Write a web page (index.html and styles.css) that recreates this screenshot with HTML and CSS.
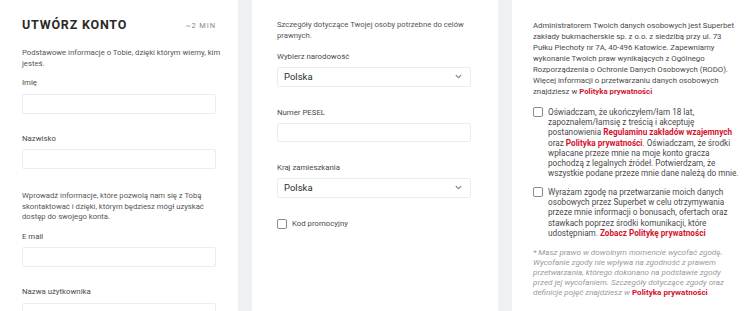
FILE: index.html
```html
<!DOCTYPE html>
<html lang="pl">
<head>
<meta charset="utf-8">
<link rel="stylesheet" href="styles.css">
</head>
<body>
<div class="page">
  <section class="card card-1">
    <div class="head">
      <h1 class="title">UTWÓRZ KONTO</h1>
      <span class="time">~2 MIN</span>
    </div>
    <p class="desc">Podstawowe informacje o Tobie, dzięki którym wiemy, kim<br>jesteś.</p>
    <label class="label">Imię</label>
    <div class="input"></div>
    <label class="label gap">Nazwisko</label>
    <div class="input"></div>
    <p class="desc desc-2">Wprowadź informacje, które pozwolą nam się z Tobą<br>skontaktować i dzięki, którym będziesz mógł uzyskać<br>dostęp do swojego konta.</p>
    <label class="label">E mail</label>
    <div class="input"></div>
    <label class="label gap">Nazwa użytkownika</label>
    <div class="input"></div>
  </section>

  <section class="card card-2">
    <p class="desc">Szczegóły dotyczące Twojej osoby potrzebne do celów<br>prawnych.</p>
    <label class="label label-first">Wybierz narodowość</label>
    <div class="input select"><span>Polska</span><svg class="chev" width="7" height="5" viewBox="0 0 7 5"><polyline points="0.8,1 3.5,3.7 6.2,1" fill="none" stroke="#8a8a8a" stroke-width="1.1"/></svg></div>
    <label class="label gap">Numer PESEL</label>
    <div class="input"></div>
    <label class="label gap">Kraj zamieszkania</label>
    <div class="input select"><span>Polska</span><svg class="chev" width="7" height="5" viewBox="0 0 7 5"><polyline points="0.8,1 3.5,3.7 6.2,1" fill="none" stroke="#8a8a8a" stroke-width="1.1"/></svg></div>
    <div class="check promo"><span class="box"></span><span class="check-text">Kod promocyjny</span></div>
  </section>

  <section class="card card-3">
    <p class="info">Administratorem Twoich danych osobowych jest Superbet<br>zakłady bukmacherskie sp. z o.o. z siedzibą przy ul. 73<br>Pułku Piechoty nr 7A, 40-496 Katowice. Zapewniamy<br>wykonanie Twoich praw wynikających z Ogólnego<br>Rozporządzenia o Ochronie Danych Osobowych (RODO).<br>Więcej informacji o przetwarzaniu danych osobowych<br>znajdziesz w <a class="link">Polityka prywatności</a></p>
    <div class="check consent"><span class="box"></span><span class="check-text">Oświadczam, że ukończyłem/łam 18 lat,<br>zapoznałem/łamsię z treścią i akceptuję<br>postanowienia <a class="link">Regulaminu zakładów wzajemnych</a><br>oraz <a class="link">Polityka prywatności</a>. Oświadczam, że środki<br>wpłacane przeze mnie na moje konto gracza<br>pochodzą z legalnych źródeł. Potwierdzam, że<br>wszystkie podane przeze mnie dane należą do mnie.</span></div>
    <div class="check consent consent-2"><span class="box"></span><span class="check-text">Wyrażam zgodę na przetwarzanie moich danych<br>osobowych przez Superbet w celu otrzymywania<br>przeze mnie informacji o bonusach, ofertach oraz<br>stawkach poprzez środki komunikacji, które<br>udostępniam. <a class="link">Zobacz Politykę prywatności</a></span></div>
    <p class="note">* Masz prawo w dowolnym momencie wycofać zgodę.<br>Wycofanie zgody nie wpływa na zgodność z prawem<br>przetwarzania, którego dokonano na podstawie zgody<br>przed jej wycofaniem. Szczegóły dotyczące zgody oraz<br>definicje pojęć znajdziesz w <a class="link">Polityka prywatności</a></p>
  </section>
</div>
</body>
</html>
```

FILE: styles.css
```css
* { box-sizing: border-box; }
html, body { margin: 0; padding: 0; }
body {
  background: #eef0f4;
  font-family: Roboto, "Liberation Sans", Arial, sans-serif;
  color: #4a4a4a;
  width: 750px;
  height: 311px;
  overflow: hidden;
}
.page {
  display: grid;
  grid-template-columns: 238px 246px 238px;
  column-gap: 14px;
  height: 311px;
  overflow: hidden;
}
.card {
  background: #fff;
  height: 311px;
  overflow: hidden;
  display: flex;
  flex-direction: column;
  align-items: stretch;
}
.card-1 { padding: 17px 22px 0 22px; }
.card-2 { padding: 20px 27px 0 25px; }
.card-3 { padding: 20px 10px 0 21px; }

.head {
  display: flex;
  justify-content: space-between;
  align-items: center;
  height: 16px;
  flex: none;
}
.title {
  margin: 0;
  font-size: 12.5px;
  font-weight: 700;
  letter-spacing: 0.8px;
  color: #2a2a2a;
  line-height: 16px;
}
.time {
  font-size: 7.5px;
  letter-spacing: 0.9px;
  color: #8a8a8a;
}
.desc {
  margin: 15px 0 0;
  font-size: 7.7px;
  line-height: 10.5px;
  color: #555;
  white-space: nowrap;
  flex: none;
}
.card-2 .desc { margin-top: 0; }
.desc-2 { margin-top: 22px; }
.label {
  display: block;
  margin-top: 9px;
  font-size: 7.8px;
  line-height: 10.5px;
  color: #4a4a4a;
  flex: none;
}
.label.gap { margin-top: 20px; }
.card-2 .label-first { margin-top: 11px; }
.card-2 .label.gap { margin-top: 21px; }
.input {
  flex: none;
  margin-top: 5px;
  height: 20px;
  border: 1px solid #ececec;
  border-radius: 2px;
  background: #fff;
}
.card-2 .input { margin-top: 4.5px; height: 19.5px; }
.select {
  display: flex;
  align-items: center;
  justify-content: space-between;
  padding: 0 8px 0 6px;
  font-size: 9.5px;
  color: #2b2b2b;
}
.chev { display: block; }

.check {
  display: flex;
  align-items: flex-start;
  gap: 5px;
  flex: none;
}
.box {
  flex: none;
  width: 10px;
  height: 10px;
  border: 1px solid #8c8c8c;
  border-radius: 2px;
  background: #fff;
}
.promo {
  margin-top: 21px;
  align-items: center;
}
.promo .check-text {
  font-size: 7.8px;
  color: #4a4a4a;
  line-height: 10px;
}
.info {
  margin: 0;
  font-size: 7.8px;
  line-height: 11px;
  color: #4a4a4a;
  white-space: nowrap;
  flex: none;
}
.consent {
  margin-top: 10px;
}
.consent .check-text {
  font-size: 8.2px;
  line-height: 10.2px;
  color: #4a4a4a;
  white-space: nowrap;
}
.consent-2 { margin-top: 8.5px; }
.note {
  margin: 9px 0 0;
  font-size: 8.1px;
  line-height: 10px;
  font-style: italic;
  color: #9a9a9a;
  white-space: nowrap;
  flex: none;
}
.link {
  color: #d3132e;
  font-weight: 700;
  text-decoration: none;
}
.note .link { font-style: normal; }
```
